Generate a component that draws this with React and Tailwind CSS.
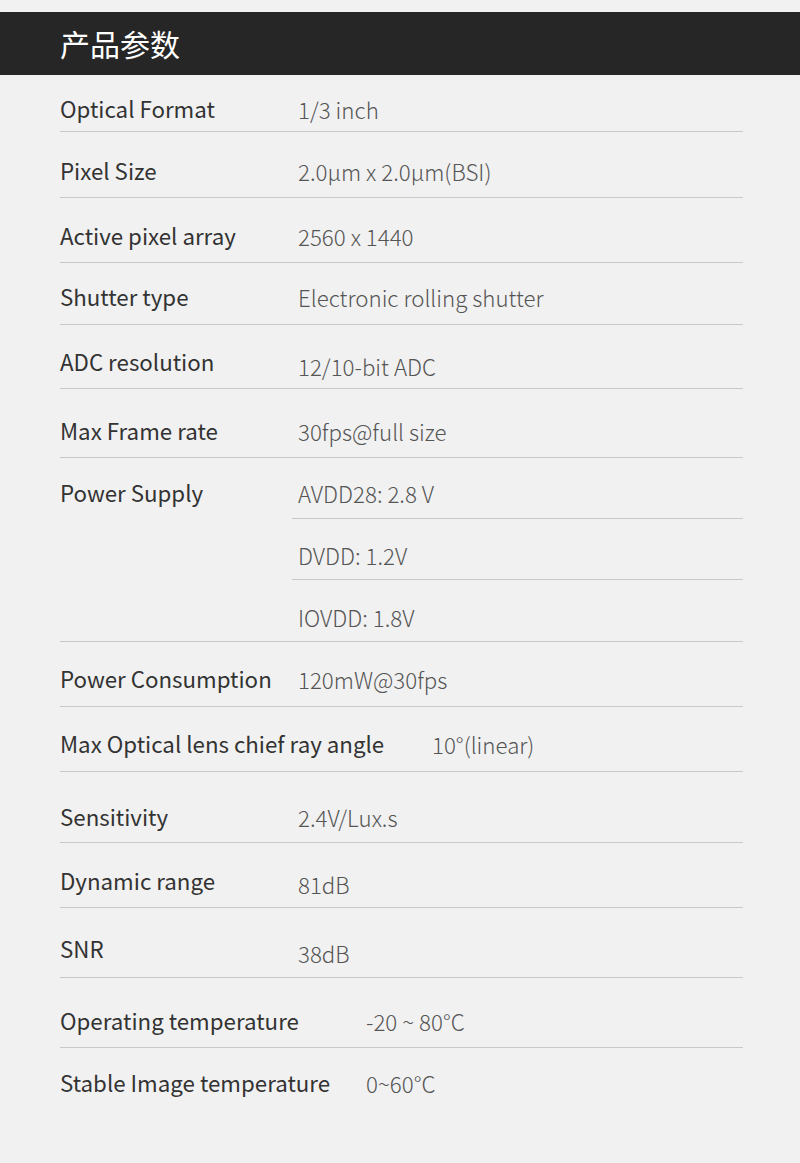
import React from "react";

// each row: height, label / value top padding, label column width
const specs = [
	{ label: "Optical Format", value: "1/3 inch", row: "h-[57px]", lp: "pt-[18px]", vp: "pt-[19px]", col: "w-[238px]" },
	{ label: "Pixel Size", value: "2.0µm x 2.0µm(BSI)", row: "h-[66px]", lp: "pt-[23px]", vp: "pt-[24px]", col: "w-[238px]" },
	{ label: "Active pixel array", value: "2560 x 1440", row: "h-[65px]", lp: "pt-[22px]", vp: "pt-[23px]", col: "w-[238px]" },
	{ label: "Shutter type", value: "Electronic rolling shutter", row: "h-[62px]", lp: "pt-[18px]", vp: "pt-[19px]", col: "w-[238px]" },
	{ label: "ADC resolution", value: "12/10-bit ADC", row: "h-[64px]", lp: "pt-[21px]", vp: "pt-[26px]", col: "w-[238px]" },
	{ label: "Max Frame rate", value: "30fps@full size", row: "h-[69px]", lp: "pt-[26px]", vp: "pt-[27px]", col: "w-[238px]" },
];

const specs2 = [
	{ label: "Power Consumption", value: "120mW@30fps", row: "h-[65px]", lp: "pt-[21px]", vp: "pt-[22px]", col: "w-[238px]" },
	{ label: "Max Optical lens chief ray angle", value: "10°(linear)", row: "h-[65px]", lp: "pt-[21px]", vp: "pt-[22px]", col: "w-[372px]" },
	{ label: "Sensitivity", value: "2.4V/Lux.s", row: "h-[71px]", lp: "pt-[29px]", vp: "pt-[30px]", col: "w-[238px]" },
	{ label: "Dynamic range", value: "81dB", row: "h-[65px]", lp: "pt-[22px]", vp: "pt-[26px]", col: "w-[238px]" },
	{ label: "SNR", value: "38dB", row: "h-[70px]", lp: "pt-[25px]", vp: "pt-[30px]", col: "w-[238px]" },
	{ label: "Operating temperature", value: "-20 ~ 80°C", row: "h-[70px]", lp: "pt-[27px]", vp: "pt-[28px]", col: "w-[306px]" },
	{ label: "Stable Image temperature", value: "0~60°C", row: "h-[72px] border-b-0", lp: "pt-[19px]", vp: "pt-[20px]", col: "w-[306px]" },
];

const supply = [
	{ value: "AVDD28: 2.8 V", row: "h-[61px] border-b", vp: "pt-[20px]" },
	{ value: "DVDD: 1.2V", row: "h-[61px] border-b", vp: "pt-[21px]" },
	{ value: "IOVDD: 1.8V", row: "h-[61px]", vp: "pt-[22px]" },
];

const font = { fontFamily: '"Noto Sans CJK SC", "Noto Sans", sans-serif' };

const labelCls = "text-[22.3px] leading-[30px] text-[#333] whitespace-nowrap";
const valueCls = "text-[22.3px] leading-[30px] text-[#555] font-light whitespace-nowrap";

const Row = ({ item }) => (
	<div className={`flex items-start border-b border-[#c9c9c9] ${item.row}`}>
		<div className={`${item.col} shrink-0 ${item.lp} ${labelCls}`}>{item.label}</div>
		<div className={`${item.vp} ${valueCls}`}>{item.value}</div>
	</div>
);

export default function App() {
	return (
		<div className="w-[800px] min-h-[1163px] bg-[#f1f1f1] pt-[12px]" style={font}>
			{/* Title bar */}
			<div className="h-[63px] bg-[#262626] flex items-center pl-[60px]">
				<h1 className="text-[30px] leading-none text-white font-normal -mt-[1px]">产品参数</h1>
			</div>

			<div className="ml-[60px] w-[683px]">
				{specs.map((s) => (
					<Row key={s.label} item={s} />
				))}

				{/* Power supply block */}
				<div className="flex items-start border-b border-[#c9c9c9]">
					<div className={`w-[232px] shrink-0 pt-[19px] ${labelCls}`}>Power Supply</div>
					<div className="flex-1 flex flex-col">
						{supply.map((s) => (
							<div key={s.value} className={`border-[#c9c9c9] pl-[6px] ${s.row}`}>
								<div className={`${s.vp} ${valueCls}`}>{s.value}</div>
							</div>
						))}
					</div>
				</div>

				{specs2.map((s) => (
					<Row key={s.label} item={s} />
				))}
			</div>
		</div>
	);
}
